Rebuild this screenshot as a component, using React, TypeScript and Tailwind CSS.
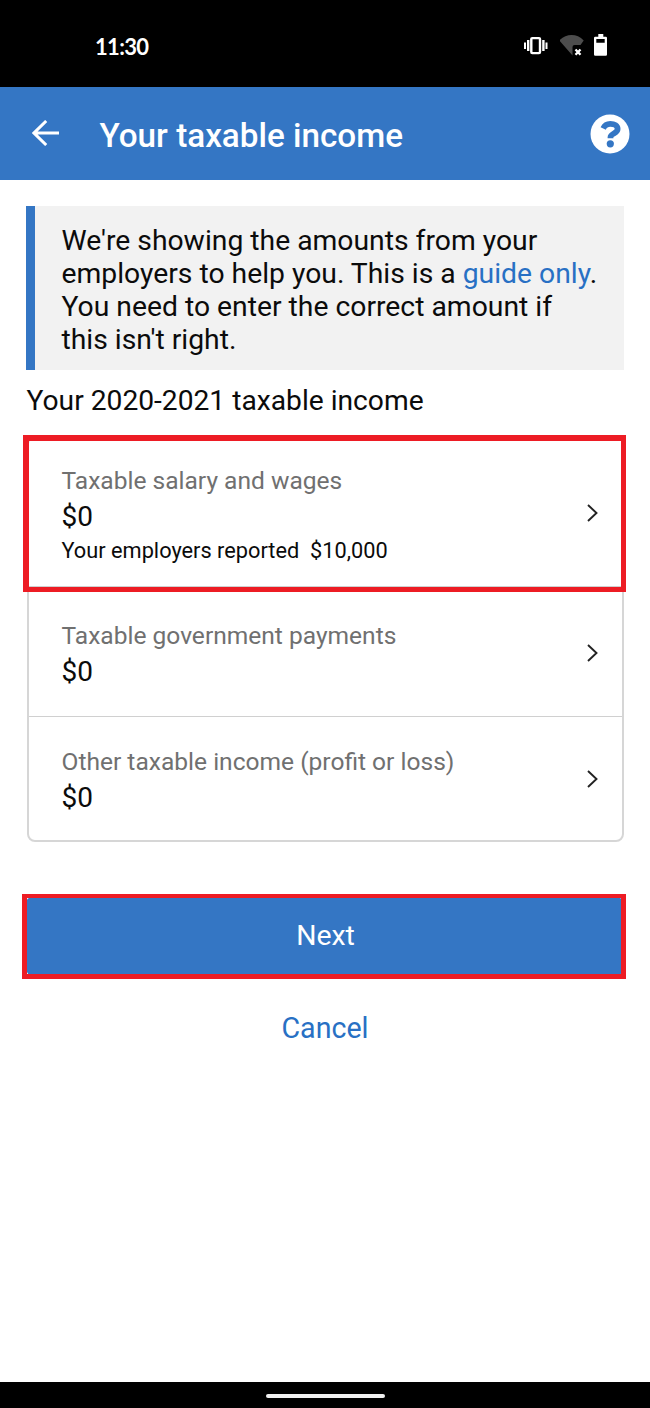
import type { ReactNode } from "react"

type IncomeItem = {
  label: string
  amount: string
  note?: string
}

const items: IncomeItem[] = [
  { label: "Taxable salary and wages", amount: "$0", note: "Your employers reported  $10,000" },
  { label: "Taxable government payments", amount: "$0" },
  { label: "Other taxable income (profit or loss)", amount: "$0" },
]

function StatusBar() {
  return (
    <div className="flex h-[87px] items-start justify-between bg-black pt-[34px] pr-[42px] pl-[95px] text-white">
      <span className="font-['Lato',sans-serif] text-[22px] leading-[26px] font-bold tracking-[-0.65px]">11:30</span>
      <div className="flex">
        <svg className="mr-3 h-[26px] w-6" viewBox="0 0 24 26" fill="currentColor">
          <path d="M0 8.5h2v6.5H0zM3 6h2.4v11H3zM18.2 6h2.4v11h-2.4zM21.5 8.5h2v6.5h-2z" />
          <rect x="7.3" y="4.1" width="8.7" height="15" rx="1" fill="none" stroke="currentColor" strokeWidth="2.4" />
        </svg>
        <svg className="mr-[10px] h-[26px] w-6" viewBox="0 0 24 26">
          <path d="M-.7 6.4C6-.9 17-.9 23.7 6.4L20.5 11H14.5Q12.5 11 12.5 13V21.5Z" fill="#4d4d4d" />
          <path d="M15.5 15.5l5 5.3m0-5.3l-5 5.3" stroke="currentColor" strokeWidth="2.3" />
        </svg>
        <svg className="h-[26px] w-[14px]" viewBox="0 0 14 26" fill="currentColor">
          <path
            fillRule="evenodd"
            d="M4.3 0h5v2.7h2.5q1.2 0 1.2 1.2v16.6q0 1.2-1.2 1.2H1.2q-1.2 0-1.2-1.2V3.9q0-1.2 1.2-1.2h3.1zM2.3 5v3.8h8.4V5z"
          />
        </svg>
      </div>
    </div>
  )
}

function Header() {
  return (
    <header className="flex h-[93px] items-center bg-[#3476c4] pr-5 pl-8 text-white">
      <svg className="-mt-[2px] h-[26px] w-[27px]" viewBox="0 0 27 26" fill="none" stroke="currentColor" strokeWidth="3">
        <path d="M14.2 1L2 13l12.2 12M2 13h25" />
      </svg>
      <h1 className="mt-[5px] ml-[40.5px] text-[33.25px] leading-[40px] font-medium">Your taxable income</h1>
      <svg className="ml-auto h-10 w-10" viewBox="0 0 40 40">
        <circle cx="20" cy="20" r="19.5" fill="currentColor" />
        <path
          d="M13.2 14.4C14.6 11.4 17.2 9.9 20.3 9.9c4.2 0 7.3 1.9 7.3 5.1 0 4.6-7.1 4.2-7.1 8.3v.9"
          fill="none"
          stroke="#3476c4"
          strokeWidth="5.8"
        />
        <circle cx="20.3" cy="29.8" r="3.6" fill="#3476c4" />
      </svg>
    </header>
  )
}

function IncomeRow({ label, amount, note }: IncomeItem) {
  return (
    <div className="flex items-center justify-between pr-[24px] pl-[32.5px]">
      <div className="pt-[6px]">
        <p className="text-[24.55px] leading-[34px] text-[#707070]">{label}</p>
        <p className="text-[28px] leading-[38px]">{amount}</p>
        {note && <p className="text-[21.75px] leading-[30px] whitespace-pre">{note}</p>}
      </div>
      <svg className="mt-[2px] h-[18px] w-[11px]" viewBox="0 0 11 18" fill="none" stroke="#222" strokeWidth="1.9">
        <path d="M1 1l8.5 8L1 17" />
      </svg>
    </div>
  )
}

function Highlight({ className, children }: { className: string; children: ReactNode }) {
  return (
    <div className="relative">
      {children}
      <div className={`pointer-events-none absolute border-[#ed1c24] ${className}`} />
    </div>
  )
}

export default function App() {
  return (
    <div className="flex h-[1408px] w-[650px] flex-col bg-white font-['Roboto',sans-serif] text-[#0b0b0b]">
      <StatusBar />
      <Header />

      <main className="flex-1 px-[26px] pt-[26px]">
        <div className="mr-[0.5px] h-[164px] border-l-[9px] border-[#3476c4] bg-[#f2f2f2] pt-[18px] pl-[26.5px] text-[28.3px] leading-[33px]">
          We're showing the amounts from your
          <br />
          employers to help you. This is a <a className="text-[#2870c4]">guide only</a>.
          <br />
          You need to enter the correct amount if
          <br />
          this isn't right.
        </div>

        <h2 className="mt-[12px] pl-[0.5px] text-[28.2px] leading-[38px]">Your 2020-2021 taxable income</h2>

        <div className="mt-[16px] ml-px grid h-[406px] grid-rows-[149px_130px_121px] divide-y divide-[#d0d0d0] rounded-lg border-2 border-[#d6d6d6]">
          <Highlight className="-top-[3px] -right-[4px] -bottom-[6px] -left-[6px] border-t-[6px] border-r-[5px] border-b-[5px] border-l-[6px]">
            <div className="grid h-full">
              <IncomeRow {...items[0]} />
            </div>
          </Highlight>
          <IncomeRow {...items[1]} />
          <IncomeRow {...items[2]} />
        </div>

        <div className="mt-[55px] mr-[1px]">
          <Highlight className="-top-[3px] -right-[3px] -bottom-[4px] -left-[4px] border-x-[5px] border-t-[4px] border-b-[5px]">
            <button className="block h-[78px] w-full rounded-md bg-[#3476c4] pl-[2px] text-[28.4px] text-white">Next</button>
          </Highlight>
        </div>
        <button className="mt-[32px] block h-10 w-full text-[28.6px] text-[#2870c4]">Cancel</button>
      </main>

      <div className="flex h-[26px] items-center justify-center bg-black pt-[2px]">
        <div className="h-1 w-[119px] rounded-full bg-[#f1f1f1]" />
      </div>
    </div>
  )
}
